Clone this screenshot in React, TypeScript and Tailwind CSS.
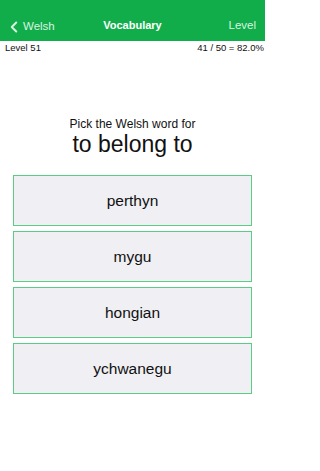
import { ChevronLeft } from "lucide-react"

const options = ["perthyn", "mygu", "hongian", "ychwanegu"]

export default function App() {
  return (
    <div
      className="w-[265px] h-[471px] bg-white text-[#111]"
      style={{ fontFamily: '"Liberation Sans", Arial, sans-serif' }}
    >
      {/* Nav bar */}
      <div className="h-[41px] bg-[#11ad4a] flex items-end pb-[5px] px-[7px] relative">
        <div className="flex items-center text-[#d9f3e1] text-[11.5px]">
          <ChevronLeft className="w-[18px] h-[18px] -ml-[2px]" strokeWidth={2.6} />
          <span>Welsh</span>
        </div>
        <div className="absolute left-0 right-0 bottom-[8px] text-center text-white font-bold text-[11px]">
          Vocabulary
        </div>
        <div className="ml-auto text-[#d9f3e1] text-[11.5px] pr-[2px] pb-[2px]">Level</div>
      </div>

      {/* Status row */}
      <div className="flex justify-between items-center h-[15px] px-[5px] pr-[1px] text-[9.5px]">
        <span>Level 51</span>
        <span>41 / 50 = 82.0%</span>
      </div>

      {/* Prompt */}
      <div className="mt-[60px] text-center">
        <div className="text-[12px] leading-[16px]">Pick the Welsh word for</div>
        <div className="text-[23px] leading-[24px]">to belong to</div>
      </div>

      {/* Options */}
      <div className="mt-[19px] px-[13px] flex flex-col gap-[5px]">
        {options.map((word) => (
          <button
            key={word}
            className="h-[51px] w-full bg-[#efeff4] border border-[#5ccb85] text-[15.5px] text-[#111] flex items-center justify-center"
          >
            {word}
          </button>
        ))}
      </div>
    </div>
  )
}
